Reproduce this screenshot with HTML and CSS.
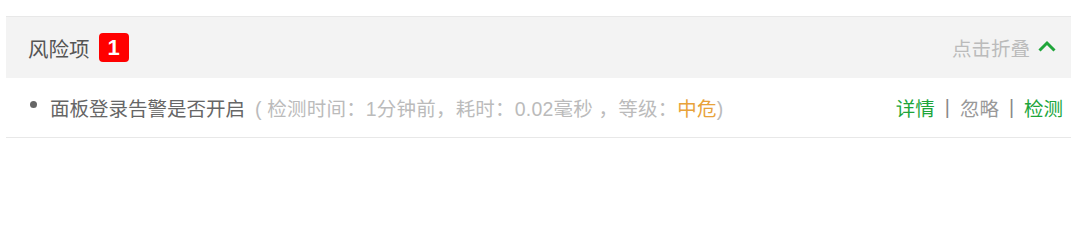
FILE: index.html
```html
<!DOCTYPE html>
<html lang="zh-CN">
<head>
<meta charset="utf-8">
<title>风险项</title>
<link rel="stylesheet" href="styles.css">
</head>
<body>
<div class="panel">
  <div class="panel-head">
    <div class="title">风险项<span class="badge">1</span></div>
    <div class="fold">点击折叠
      <svg class="chev" width="18" height="12" viewBox="0 0 18 12"><polyline points="1.5,10.5 9,3 16.5,10.5" fill="none" stroke="#20a53a" stroke-width="3"/></svg>
    </div>
  </div>
  <div class="risk-row">
    <div class="risk-main">
      <span class="dot"></span>
      <span class="name">面板登录告警是否开启</span>
      <span class="meta">( 检测时间：1分钟前，耗时：0.02毫秒 ，等级：<span class="level">中危</span>)</span>
    </div>
    <div class="actions">
      <span class="act green">详情</span><span class="sep">|</span><span class="act gray">忽略</span><span class="sep">|</span><span class="act green">检测</span>
    </div>
  </div>
</div>
</body>
</html>
```

FILE: styles.css
```css
html, body {
  margin: 0;
  padding: 0;
  background: #fff;
  font-family: "Liberation Sans", "Noto Sans CJK SC", sans-serif;
}
body {
  padding-top: 16px;
}
.panel {
  margin-left: 6px;
  width: 1065px;
}
.panel-head {
  border-top: 1px solid #e8e8e8;
  background: #f3f3f3;
  height: 61px;
  display: flex;
  align-items: center;
  justify-content: space-between;
  padding: 0 15px 0 22px;
}
.title {
  display: flex;
  align-items: center;
  font-size: 20.5px;
  color: #555;
}
.badge {
  display: inline-flex;
  align-items: center;
  justify-content: center;
  margin-left: 9px;
  width: 30px;
  height: 29px;
  border-radius: 4px;
  background: #ff0000;
  color: #fff;
  font-family: "Liberation Sans", Arial, sans-serif;
  font-size: 22px;
  font-weight: 600;
}
.fold {
  display: flex;
  align-items: center;
  font-size: 19.5px;
  color: #bbb;
}
.chev {
  margin-left: 8px;
  margin-top: -3px;
}
.risk-row {
  height: 59px;
  border-bottom: 1px solid #e8e8e8;
  display: flex;
  align-items: center;
  justify-content: space-between;
  padding: 0 8px 0 24px;
}
.risk-main {
  display: flex;
  align-items: center;
  font-size: 19.5px;
}
.dot {
  width: 7px;
  height: 7px;
  border-radius: 50%;
  background: #666;
  margin-right: 13px;
  margin-top: -6px;
}
.name {
  color: #666;
}
.meta {
  color: #bbb;
  margin-left: 10px;
  letter-spacing: 0.2px;
}
.level {
  color: #e8a23a;
}
.actions {
  font-size: 19.5px;
  display: flex;
  align-items: center;
}
.green { color: #20a53a; }
.gray { color: #999; }
.sep {
  color: #888;
  margin: 0 10px;
}
```
